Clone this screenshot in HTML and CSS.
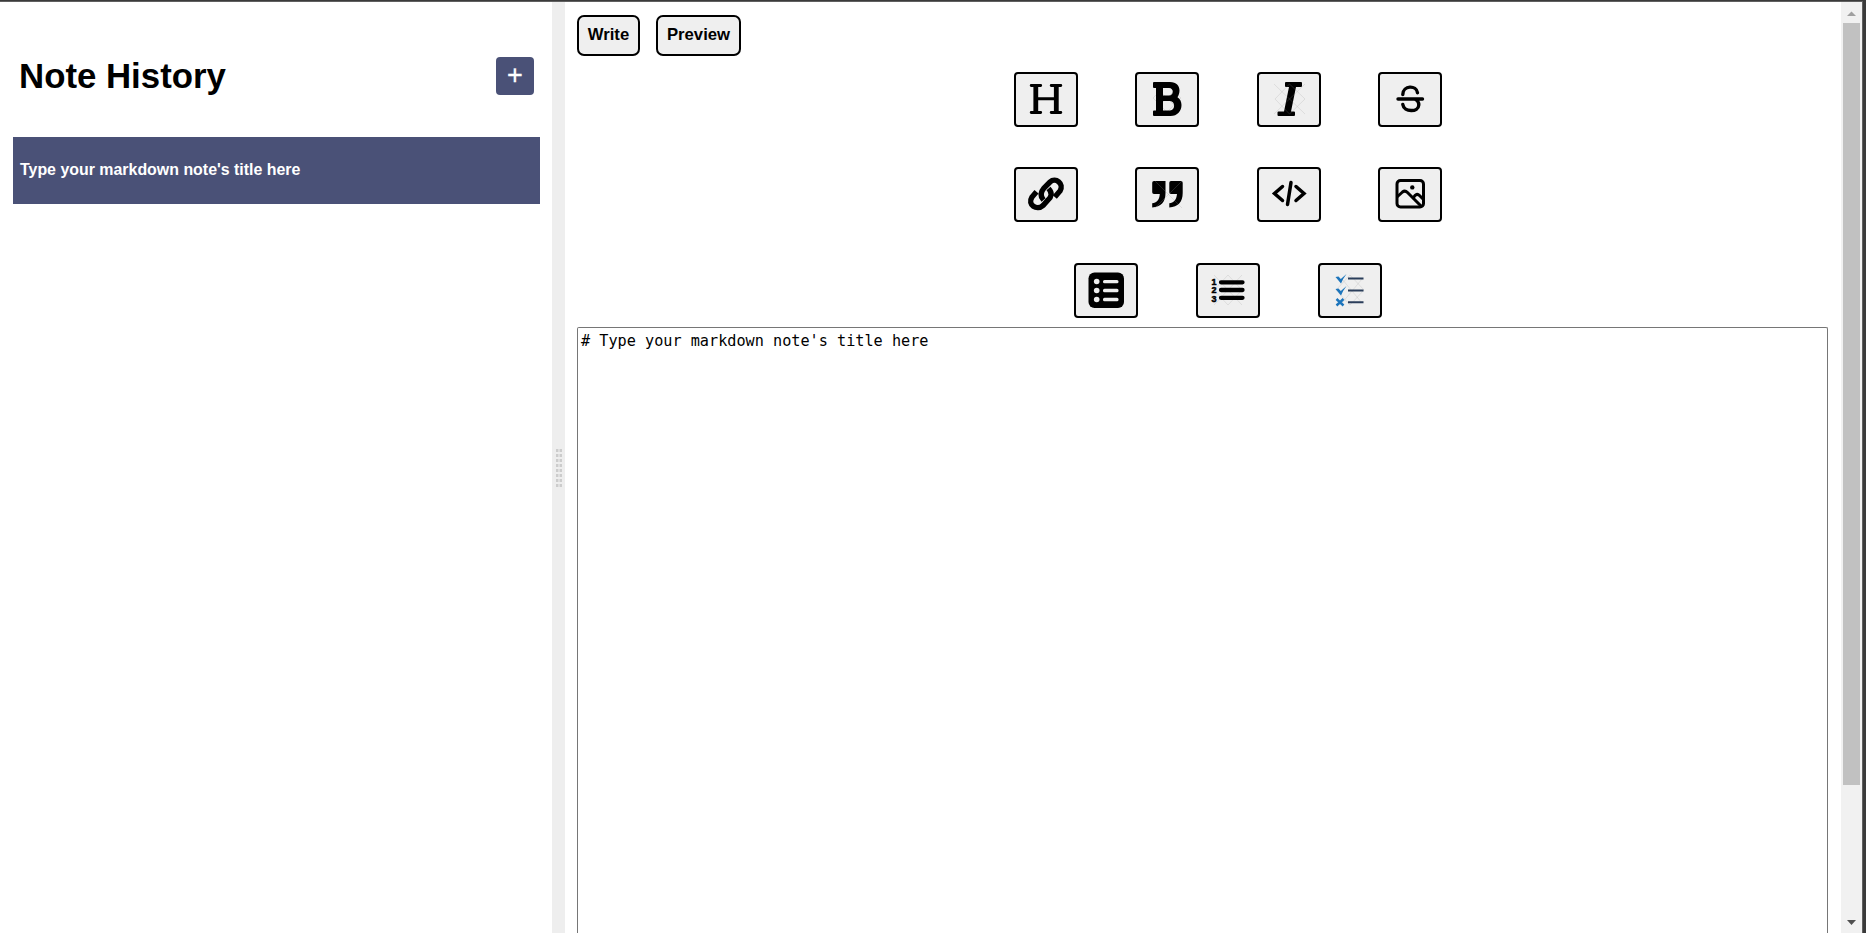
FILE: index.html
```html
<!DOCTYPE html>
<html lang="en">
<head>
<meta charset="utf-8">
<title>Markdown Notes</title>
<link rel="stylesheet" href="styles.css">
</head>
<body>
<div class="window">
  <main class="split">
    <section class="sidebar">
      <div class="sidebar-header">
        <h1 class="heading">Note History</h1>
        <button class="new-note">+</button>
      </div>
      <div class="note-item"><h4 class="note-title">Type your markdown note's title here</h4></div>
    </section>
    <div class="gutter">
      <div class="grip"></div>
    </div>
    <section class="editor">
      <div class="tabs">
        <button class="tab tab-write">Write</button>
        <button class="tab tab-preview">Preview</button>
      </div>
      <div class="toolbar">
        <div class="tool-row">
          <button class="tool"><svg viewBox="0 0 60 51"><g fill="none" stroke="#000" stroke-linecap="round"><path stroke-width="4.800" d="M19.800 12.500V37.500M40.300 12.500V37.500"/><path stroke-width="2.900" d="M19.800 24.800H40.300M15.200 11.500H24.700M35.200 11.500H44.800M15.200 38.500H24.700M35.200 38.500H44.800"/></g></svg></button>
          <button class="tool"><svg viewBox="0 0 60 51"><path class="mark" d="M16 24 30 10 44 24 30 38ZM20 34 40 14M20 14 40 34"/><path fill-rule="evenodd" d="M17 8H33C39.500 8 42.500 12 42.500 16.500C42.500 19.500 41.500 21.500 40.500 23.200C43.200 25 44.500 27.800 44.500 31C44.500 37 40.500 42 33.500 42H17Q16 42 16 41V37.500Q16 36.500 17 36.500H19V14H17Q16 14 16 13V9Q16 8 17 8ZM26 14V21.500H32C37 21.500 37 14 32 14ZM26 27V36.500H33C38.500 36.500 38.500 27 33 27Z"/></svg></button>
          <button class="tool"><svg viewBox="0 0 60 51"><path d="M27 8H42Q43 8 43 9V12Q43 13 42 13H37L32 37.500H35Q36 37.500 36 38.500V41Q36 42 35 42H19.500Q18.500 42 18.500 41V38.500Q18.500 37.500 19.500 37.500H25L30 13H27Q26 13 26 12V9Q26 8 27 8Z"/><path class="mark" d="M15 10 46 40M46 10 15 40M16 25 30.500 10 46 25 30.500 40Z"/></svg></button>
          <button class="tool"><svg viewBox="0 0 60 51"><g fill="none" stroke="#000" stroke-width="3.400" stroke-linecap="round"><path d="M18 25H42.500M22.800 20.500C23 11 36.500 11 37.500 18.800M22.800 30.500C24 38.500 38.500 38.500 38.800 31C38.900 27.500 37 26 34.500 25"/></g></svg></button>
        </div>
        <div class="tool-row">
          <button class="tool"><svg viewBox="0 0 60 51"><g fill="none" stroke="#000" stroke-width="5.400"><path d="M27.500 31C23.300 26.500 25 22.500 28 19L34 13C39.500 8 48.500 14.500 44 22L38.800 28"/><path d="M32.500 19.500C36.700 24 35.500 28 32 31L27 36.500C21 42 11 36 16 28L20.500 22.800"/></g></svg></button>
          <button class="tool"><svg viewBox="0 0 60 51"><path d="M17 12H28.500V24C28.500 33 24 38 15.200 38.500V34.200C19.500 33.800 22.500 31 22.800 25H17Q15.200 25 15.200 23.200V13.800Q15.200 12 17 12ZM34 12H44Q45.700 12 45.700 13.800V24C45.700 33 41 38 32.300 38.500V34.200C36.500 33.800 39.500 31 40 25H34Q32.300 25 32.300 23.200V13.800Q32.300 12 34 12Z"/><path class="mark" d="M18 12 45 39M45 12 18 39"/></svg></button>
          <button class="tool"><svg viewBox="0 0 60 51"><path fill="none" stroke="#000" stroke-width="3.500" stroke-linecap="round" d="M23.500 17.500 15.500 24.500 23.500 31.500M37 17.500 45 24.500 37 31.500M32 13.500 28.500 35.500"/></svg></button>
          <button class="tool"><svg viewBox="0 0 60 51"><g fill="none" stroke="#000" stroke-width="3" stroke-linejoin="round"><rect x="17" y="11.500" width="26.500" height="26.500" rx="3.500"/><path d="M17 28 22.500 23Q25 21 27.500 23.500L41.500 37.500M33.500 28.500Q36.500 23.500 39.500 26.500L43.500 30.500"/></g><circle cx="32.300" cy="18.400" r="2.200"/></svg></button>
        </div>
        <div class="tool-row tool-row-last">
          <button class="tool"><svg viewBox="0 0 60 51"><rect x="12.500" y="7.500" width="35.500" height="35.500" rx="6"/><g fill="#efefef"><circle cx="20.700" cy="16.500" r="2.800"/><circle cx="20.700" cy="25.500" r="2.800"/><circle cx="20.700" cy="34.500" r="2.800"/><rect x="27" y="14.900" width="15.500" height="3.400" rx="1.500"/><rect x="27" y="23.800" width="15.500" height="3.400" rx="1.500"/><rect x="27" y="32.800" width="15.500" height="3.400" rx="1.500"/></g></svg></button>
          <button class="tool"><svg viewBox="0 0 60 51"><path class="mark" d="M16 10 44 40M44 10 16 40M16 25 30 10 44 25 30 40Z"/><path fill="none" stroke="#000" stroke-width="4.300" stroke-linecap="round" d="M23 17.300H44.500M23 25H44.500M23 32.800H44.500"/><g class="digits"><text x="13.500" y="20">1</text><text x="13.500" y="28">2</text><text x="13.500" y="36.700">3</text></g></svg></button>
          <button class="tool"><svg viewBox="0 0 60 51"><path class="mark" d="M16 25 30 10 44 25 30 40ZM22 38 42 14M22 14 42 38"/><g fill="none" stroke="#2b3e5b" stroke-width="2"><path d="M28 13.500H43.500M28 25.500H43.500M28 37.300H43.500"/></g><path fill="#1c75bc" d="M15.500 12 18.500 11.500 20.800 14 26.500 9Q23 13.500 21 18.500ZM15.500 24 18.500 23.500 20.800 26 26.500 21Q23 25.500 21 30.500Z"/><path fill="none" stroke="#1c75bc" stroke-width="2.400" d="M16.500 34 23.500 40.500M23.500 34 16.500 40.500"/></svg></button>
        </div>
      </div>
      <div class="textbox"># Type your markdown note's title here</div>
    </section>
  </main>
  <aside class="scrollbar">
    <svg class="arrow" viewBox="0 0 21 21"><path fill="#a0a0a0" d="M6 14 10.500 9.500 15 14Z"/></svg>
    <div class="thumb"></div>
    <svg class="arrow" viewBox="0 0 21 21"><path fill="#505050" d="M6 8 10.500 13 15 8Z"/></svg>
  </aside>
</div>
</body>
</html>
```
FILE: styles.css
```css
* { box-sizing: border-box; }
body {
  margin: 0;
  height: 933px;
  overflow: hidden;
  background: #fff;
  color: #000;
  font-family: "Liberation Sans", Arial, sans-serif;
}
button { font-family: inherit; margin: 0; color: #000; }
.window {
  display: flex;
  height: 933px;
  border-top: 1px solid #3a3a3a;
  border-right: 3px solid #3a3a3a;
}
.split {
  display: flex;
  flex: 1;
  border-top: 1px solid #606060;
}
.sidebar { width: 552px; padding: 55px 12px 0 13px; }
.sidebar-header {
  display: flex;
  justify-content: space-between;
  height: 80px;
  padding: 0 6px;
}
.heading { margin: 0; font-size: 34.8px; line-height: 38px; }
.new-note {
  width: 38px;
  height: 38px;
  padding: 0 0 2px;
  border: 0;
  border-radius: 4px;
  background: #4a5177;
  color: #fff;
  font-size: 27px;
  line-height: 36px;
  -webkit-text-stroke: .3px #fff;
}
.note-item {
  display: flex;
  align-items: center;
  height: 67px;
  padding: 0 7px 2px;
  background: #4a5177;
  color: #fff;
}
.note-title { margin: 0; font-size: 15.93px; }
.gutter {
  display: flex;
  align-items: center;
  justify-content: center;
  width: 13px;
  background: #eee;
}
.grip {
  width: 6px;
  height: 38px;
  background: repeating-linear-gradient(to bottom, #ccc 0 3px, #eee 3px 5px);
  -webkit-mask: linear-gradient(to right, #000 0 2px, rgba(0, 0, 0, .45) 2px 4px, #000 4px);
}
.editor {
  display: flex;
  flex-direction: column;
  flex: 1;
  padding: 13px 13px 0 12px;
}
.tabs { display: flex; gap: 16px; height: 41px; }
.tab {
  padding: 0 0 1px;
  border: 2px solid #000;
  border-radius: 7px;
  background: #efefef;
  font-size: 16.7px;
  font-weight: bold;
}
.tab-write { width: 63px; }
.tab-preview { width: 85px; }
.toolbar {
  display: flex;
  flex-direction: column;
  align-items: center;
  gap: 40px;
  padding: 16px 0 9px 51px;
}
.tool-row { display: flex; gap: 57.4px; }
.tool-row-last { gap: 57.5px; margin: 1px 0 0; }
.tool {
  display: block;
  width: 64px;
  height: 55px;
  padding: 0;
  border: 2px solid #000;
  border-radius: 4px;
  background: #efefef;
}
.tool-row-last .tool:last-child { margin-left: .5px; }
.tool svg { display: block; width: 60px; height: 51px; }
.mark { fill: none; stroke: #999; stroke-opacity: .22; stroke-width: 1; }
.digits { font-size: 9px; font-weight: bold; stroke: #000; stroke-width: .5; }
.textbox {
  flex: 1;
  padding: 4px 3px;
  border: 1px solid #767676;
  border-bottom: 0;
  border-radius: 2px 2px 0 0;
  font-family: "DejaVu Sans Mono", monospace;
  font-size: 15.2px;
  line-height: 19px;
}
.scrollbar {
  display: flex;
  flex-direction: column;
  width: 22px;
  border-top: 1px solid #606060;
  border-right: 1px solid #606060;
  background: #f1f1f1;
}
.arrow { width: 21px; height: 21px; }
.thumb { width: 17px; height: 762px; margin: 0 2px auto; background: #c1c1c1; }
```
